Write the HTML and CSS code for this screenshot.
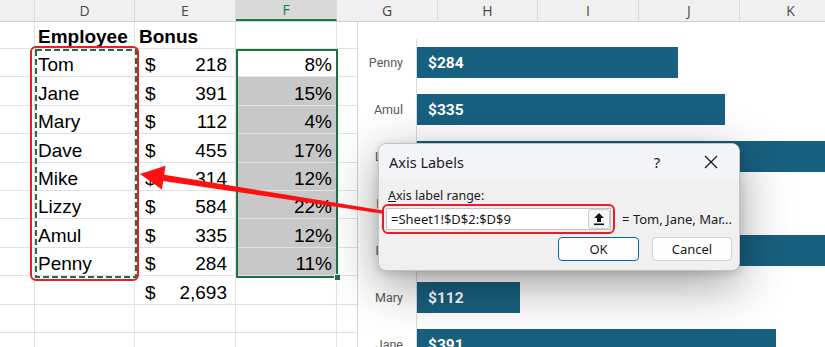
FILE: index.html
```html
<!DOCTYPE html>
<html>
<head>
<meta charset="utf-8">
<link rel="stylesheet" href="styles.css">
</head>
<body>
<div class="colhead">
  <div class="ch w35"></div>
  <div class="ch w100">D</div>
  <div class="ch">E</div>
  <div class="ch sel-head">F</div>
  <div class="ch">G</div>
  <div class="ch w100">H</div>
  <div class="ch">I</div>
  <div class="ch">J</div>
  <div class="ch w85">K</div>
</div>
<div class="sheet">
  <div class="row first">
    <div class="cell cc"></div><div class="cell cd b">Employee</div><div class="cell ce b">Bonus</div><div class="cell cf"></div><div class="cell cg"></div>
  </div>
  <div class="row">
    <div class="cell cc"></div><div class="cell cd">Tom</div><div class="cell ce"><span>$</span><span>218</span></div><div class="cell cf">8%</div><div class="cell cg"></div>
  </div>
  <div class="row">
    <div class="cell cc"></div><div class="cell cd">Jane</div><div class="cell ce"><span>$</span><span>391</span></div><div class="cell cf shade">15%</div><div class="cell cg"></div>
  </div>
  <div class="row">
    <div class="cell cc"></div><div class="cell cd">Mary</div><div class="cell ce"><span>$</span><span>112</span></div><div class="cell cf shade">4%</div><div class="cell cg"></div>
  </div>
  <div class="row">
    <div class="cell cc"></div><div class="cell cd">Dave</div><div class="cell ce"><span>$</span><span>455</span></div><div class="cell cf shade">17%</div><div class="cell cg"></div>
  </div>
  <div class="row">
    <div class="cell cc"></div><div class="cell cd">Mike</div><div class="cell ce"><span>$</span><span>314</span></div><div class="cell cf shade">12%</div><div class="cell cg"></div>
  </div>
  <div class="row">
    <div class="cell cc"></div><div class="cell cd">Lizzy</div><div class="cell ce"><span>$</span><span>584</span></div><div class="cell cf shade">22%</div><div class="cell cg"></div>
  </div>
  <div class="row">
    <div class="cell cc"></div><div class="cell cd">Amul</div><div class="cell ce"><span>$</span><span>335</span></div><div class="cell cf shade">12%</div><div class="cell cg"></div>
  </div>
  <div class="row">
    <div class="cell cc"></div><div class="cell cd">Penny</div><div class="cell ce"><span>$</span><span>284</span></div><div class="cell cf shade">11%</div><div class="cell cg"></div>
  </div>
  <div class="row">
    <div class="cell cc"></div><div class="cell cd"></div><div class="cell ce"><span>$</span><span>2,693</span></div><div class="cell cf"></div><div class="cell cg"></div>
  </div>
  <div class="row">
    <div class="cell cc"></div><div class="cell cd"></div><div class="cell ce"></div><div class="cell cf"></div><div class="cell cg"></div>
  </div>
  <div class="row last">
    <div class="cell cc"></div><div class="cell cd"></div><div class="cell ce"></div><div class="cell cf"></div><div class="cell cg"></div>
  </div>
</div>

<div class="fsel"><div class="handle"></div></div>
<svg class="marquee" width="102" height="229" viewBox="0 0 102 229"><rect x="1" y="1" width="100" height="227" fill="none" stroke="#1e7145" stroke-width="2" stroke-dasharray="6 3"/></svg>
<div class="redbox"></div>

<div class="chart">
  <div class="cat"><div class="lab">Penny</div><div class="band"><div class="bar" style="width:261px">$284</div></div></div>
  <div class="cat"><div class="lab">Amul</div><div class="band"><div class="bar" style="width:308px">$335</div></div></div>
  <div class="cat"><div class="lab">Lizzy</div><div class="band"><div class="bar" style="width:408px">$584</div></div></div>
  <div class="cat"><div class="lab">Mike</div><div class="band"><div class="bar" style="width:289px">$314</div></div></div>
  <div class="cat"><div class="lab">Dave</div><div class="band"><div class="bar" style="width:408px">$455</div></div></div>
  <div class="cat"><div class="lab">Mary</div><div class="band"><div class="bar" style="width:103px">$112</div></div></div>
  <div class="cat cut"><div class="lab">Jane</div><div class="band"><div class="bar" style="width:359px">$391</div></div></div>
</div>

<div class="dialog">
  <div class="dtitle">
    <span class="dname">Axis Labels</span>
    <span class="help">?</span>
    <svg class="close" width="14" height="14" viewBox="0 0 14 14"><path d="M1 1 L13 13 M13 1 L1 13" stroke="#1a1a1a" stroke-width="1.3" fill="none"/></svg>
  </div>
  <div class="dbody">
    <div class="dlabel"><u>A</u>xis label range:</div>
    <div class="inrow">
      <div class="redwrap">
        <div class="input">
          <span class="intext">=Sheet1!$D$2:$D$9</span>
          <span class="upbtn"><svg width="12" height="14" viewBox="0 0 12 14"><path d="M6 1 L11 6 L8 6 L8 10 L4 10 L4 6 L1 6 Z" fill="#111"/><rect x="1" y="11.5" width="10" height="1.6" fill="#111"/></svg></span>
        </div>
      </div>
      <span class="preview">= Tom, Jane, Mar...</span>
    </div>
    <div class="btns">
      <div class="btn ok">OK</div>
      <div class="btn">Cancel</div>
    </div>
  </div>
</div>

<svg class="arrow" width="825" height="347" viewBox="0 0 825 347">
  <polygon points="140,174 165.5,165.8 164.2,174.7 383.2,210.5 382.8,213.8 163.2,180.9 161.9,189.6" fill="#ff1010"/>
</svg>
</body>
</html>
```

FILE: styles.css
```css
* { box-sizing: border-box; margin: 0; padding: 0; }
html, body { width: 825px; height: 347px; overflow: hidden; }
body {
  position: relative;
  background: #fff;
  font-family: "Liberation Sans", Arial, sans-serif;
  color: #000;
}

/* column headers */
.colhead {
  display: flex;
  height: 22px;
  background: #f0f0f0;
  border-bottom: 1px solid #cfcfcf;
}
.ch {
  flex: 0 0 101px;
  border-right: 1px solid #dadada;
  display: flex;
  align-items: center;
  justify-content: center;
  font-family: "Open Sans", "Noto Sans", sans-serif;
  font-size: 14px;
  color: #4a4a4a;
}
.ch.w35 { flex-basis: 35px; }
.ch.w100 { flex-basis: 100px; }
.ch.w85 { flex-basis: 85px; border-right: none; padding-left: 16px; }
.ch.sel-head {
  background: #d9d9d9;
  color: #137e43;
  border-bottom: 2px solid #137e43;
}

/* sheet grid */
.sheet { display: flex; flex-direction: column; }
.row { display: flex; height: 28.4px; }
.row.first { height: 27px; }
.row.last { height: 14px; }
.cell {
  border-right: 1px solid #e1e1e1;
  border-bottom: 1px solid #e1e1e1;
  font-size: 19px;
  line-height: 22px;
  display: flex;
  align-items: flex-end;
  white-space: nowrap;
}
.row.last .cell { border-bottom: none; }
.cell.b { font-weight: 700; }
.cc { flex: 0 0 35px; }
.cd { flex: 0 0 100px; padding-left: 3px; }
.ce { flex: 0 0 101px; padding: 0 8px 0 10px; justify-content: space-between; }
.ce.b { justify-content: flex-start; padding-left: 4px; }
.cf { flex: 0 0 101px; justify-content: flex-end; padding-right: 4px; }
.cf.shade { background: #c8c8c8; }
.cg { flex: 0 0 20px; border-right: none; }

/* selection overlays */
.fsel {
  position: absolute;
  left: 236px;
  top: 49px;
  width: 102px;
  height: 229px;
  border: 2px solid #1e7145;
}
.handle {
  position: absolute;
  right: -5px;
  bottom: -5px;
  width: 7px;
  height: 7px;
  background: #1e7145;
  border: 1px solid #fff;
}
.marquee { position: absolute; left: 35px; top: 49px; }
.redbox {
  position: absolute;
  left: 30px;
  top: 46px;
  width: 109px;
  height: 235px;
  border: 2px solid #ec1c24;
  border-radius: 6px;
}

/* chart */
.chart {
  position: absolute;
  left: 357px;
  top: 22px;
  width: 468px;
  height: 325px;
  overflow: hidden;
  background: #fff;
  border-left: 1px solid #d6d6d6;
  padding-top: 17px;
  display: flex;
  flex-direction: column;
}
.cat { display: flex; height: 47px; flex: 0 0 47px; }
.cat.cut { height: 29px; flex-basis: 29px; align-items: flex-start; }
.cat.cut .band { align-items: flex-start; padding-top: 8px; }
.cat.cut .lab { align-items: flex-start; padding-top: 16px; }
.lab {
  flex: 0 0 58px;
  padding-right: 13px;
  text-align: right;
  font-family: "Roboto", "Liberation Sans", sans-serif;
  font-size: 12.5px;
  color: #595959;
  display: flex;
  align-items: center;
  justify-content: flex-end;
}
.band {
  flex: 1;
  border-left: 1px solid #d9d9d9;
  display: flex;
  align-items: center;
}
.bar {
  flex: 0 0 auto;
  height: 31px;
  background: #18607f;
  color: #fff;
  font-family: "Roboto", "Liberation Sans", sans-serif;
  font-weight: 700;
  font-size: 15.5px;
  padding-left: 11px;
  display: flex;
  align-items: center;
}

/* dialog */
.dialog {
  position: absolute;
  left: 378px;
  top: 143px;
  width: 362px;
  height: 128px;
  background: #f0f0f0;
  border: 1px solid #c4c4c4;
  border-radius: 8px;
  box-shadow: 0 14px 50px rgba(0,0,0,0.38), 0 2px 8px rgba(0,0,0,0.15);
  overflow: hidden;
  font-family: "Noto Sans", "Open Sans", sans-serif;
  color: #1a1a1a;
}
.dtitle {
  height: 35px;
  background: #f3f4f8;
  display: flex;
  align-items: center;
  padding-left: 10px;
}
.dname { font-size: 14.5px; flex: 1; }
.help { font-size: 15px; width: 14px; text-align: center; margin-right: 40px; }
.close { margin-right: 21px; }
.dbody { padding: 8px 7px 0 3px; }
.dlabel { font-size: 12.5px; line-height: 17px; padding-left: 6px; }
.inrow { display: flex; align-items: center; }
.redwrap {
  width: 244px;
  height: 30px;
  border: 2px solid #ec1c24;
  border-radius: 6px;
  padding: 2px;
}
.input {
  height: 22px;
  background: #fff;
  border: 1px solid #c2c2c2;
  display: flex;
  align-items: center;
  justify-content: space-between;
}
.intext { font-size: 13px; padding-left: 4px; }
.upbtn {
  width: 22px;
  height: 20px;
  background: #f7f7f7;
  border: 1px solid #cdcdcd;
  border-radius: 3px;
  display: flex;
  align-items: center;
  justify-content: center;
}
.preview { font-size: 13px; margin-left: 7px; white-space: nowrap; }
.btns {
  display: flex;
  justify-content: flex-end;
  gap: 13px;
  margin-top: 3px;
}
.btn {
  width: 80px;
  height: 24px;
  background: #fdfdfd;
  border: 1px solid #d0d0d0;
  border-radius: 4px;
  display: flex;
  align-items: center;
  justify-content: center;
  font-size: 13px;
}
.btn.ok { width: 81px; border-color: #0067c0; }

.arrow { position: absolute; left: 0; top: 0; }
```
